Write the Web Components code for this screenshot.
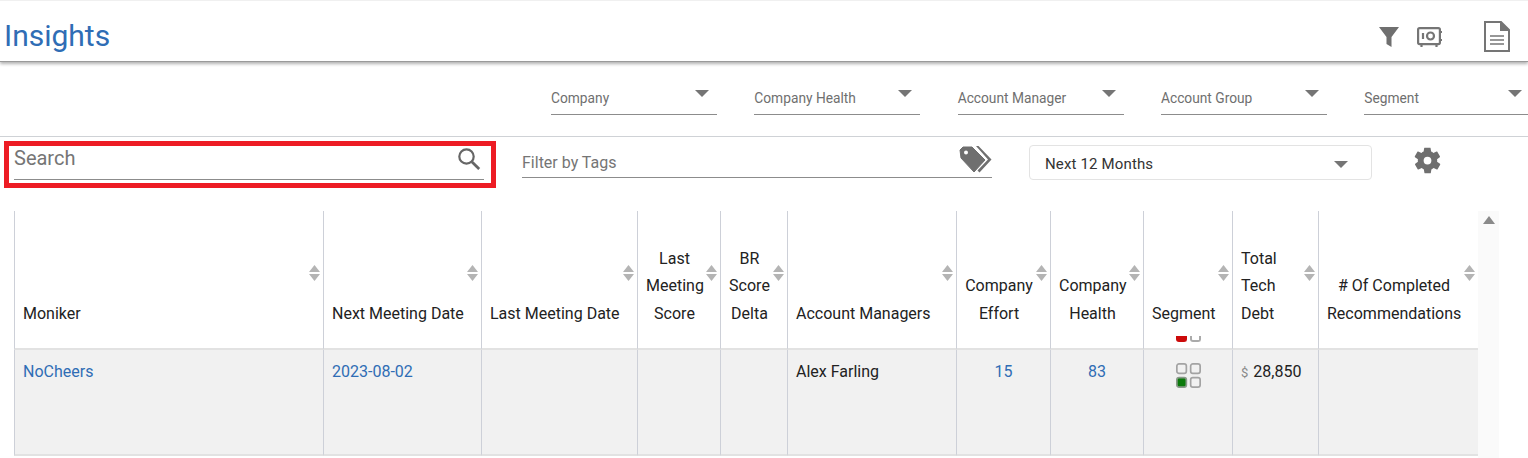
<!DOCTYPE html>
<html>
<head>
<meta charset="utf-8">
<title>Insights</title>
<style>
  html, body { margin: 0; padding: 0; background: #fff; overflow: hidden; }
  body { font-family: Roboto, "Liberation Sans", sans-serif; width: 1528px; height: 458px; }
</style>
</head>
<body>
<insights-page></insights-page>
<script>
const caret = `<svg width="14" height="7" viewBox="0 0 14 7"><path d="M0 0h14L7 7z" fill="#757575"/></svg>`;

class AppHeader extends HTMLElement {
  constructor() {
    super();
    this.attachShadow({ mode: "open" }).innerHTML = `
<style>
  :host { display: flex; align-items: center; height: 62px; box-sizing: border-box; border-top: 1px solid #f0f0f0; border-bottom: 1px solid #9a9a9a; box-shadow: 0 2px 3px rgba(0,0,0,.3); padding-left: 4px; position: relative; }
  h1 { margin: 0; font-size: 30px; font-weight: 400; color: #2f6db5; flex: 1; position: relative; top: 4px; }
  .icons { display: flex; align-items: center; padding-right: 17px; position: relative; top: 5px; }
  svg { display: block; }
</style>
<h1>Insights</h1>
<div class="icons">
  <svg width="20" height="20" viewBox="0 0 20 20" style="margin:2px 18px 0 0"><path d="M0 0h20l-7.500 10v10l-5-3v-7z" fill="#6f6f6f"/></svg>
  <svg width="25" height="21" viewBox="0 0 25 21" fill="none" stroke="#757575" stroke-width="2.200" style="margin:2px 41px 0 0"><rect x="1.100" y="1.100" width="21.800" height="16" rx="1.500"/><circle cx="13.500" cy="9" r="3.500"/><path d="M6 6v6M22.500 5h2.500M22.500 13h2.500M4.500 17v3M19.500 17v3"/></svg>
  <svg width="28" height="31" viewBox="0 0 28 31" fill="none" stroke="#757575" stroke-width="2"><path d="M2 1h16l8 8v21H2z"/><path d="M18 1v8h8" fill="#757575"/><path d="M7 15h14M7 19h14M7 23h14" stroke-width="1.600"/></svg>
</div>`;
  }
}
customElements.define("app-header", AppHeader);

class FilterSelect extends HTMLElement {
  constructor() {
    super();
    this.attachShadow({ mode: "open" }).innerHTML = `
<style>
  :host { display: block; flex: none; width: 166px; height: 31px; box-sizing: border-box; border-bottom: 1px solid #8c8c8c; font-size: 13.750px; color: #6f6f6f; position: relative; }
  .label { position: absolute; left: 0; top: 6px; line-height: 17px; }
  svg { position: absolute; right: 8px; top: 6px; display: block; }
</style>
<span class="label"><slot></slot></span>${caret}`;
  }
}
customElements.define("filter-select", FilterSelect);

class SearchBox extends HTMLElement {
  constructor() {
    super();
    this.attachShadow({ mode: "open" }).innerHTML = `
<style>
  :host { display: block; flex: none; width: 492px; height: 47px; box-sizing: border-box; border: 5px solid #ed1c24; padding: 0 7px 0 5px; }
  .field { display: flex; justify-content: space-between; height: 34px; box-sizing: border-box; border-bottom: 1px solid #8c8c8c; }
  span { font-size: 20px; color: #757575; line-height: 24px; }
  svg { display: block; margin: 1px 3px 0 0; }
</style>
<div class="field"><span>Search</span>
<svg width="24" height="24" viewBox="0 0 24 24" fill="none" stroke="#666" stroke-width="2.200"><circle cx="9.500" cy="9.500" r="7.200"/><path d="M14.800 14.800l7.400 7.200" stroke-width="2.800"/></svg>
</div>`;
  }
}
customElements.define("search-box", SearchBox);

class TagFilter extends HTMLElement {
  constructor() {
    super();
    this.attachShadow({ mode: "open" }).innerHTML = `
<style>
  :host { display: flex; justify-content: space-between; flex: none; width: 470px; height: 33px; box-sizing: border-box; border-bottom: 1px solid #8c8c8c; margin: 4px 0 0 26px; font-size: 16px; color: #757575; }
  span { line-height: 20px; margin-top: 8px; }
  svg { display: block; margin-top: 1px; }
</style>
<span>Filter by Tags</span>
<svg width="33" height="27" viewBox="0 0 33 27"><path d="M1 4 4 1 13 1 26 14 15 26 2 12Z" fill="#6f6f6f" stroke="#6f6f6f" stroke-linejoin="round"/><circle cx="7" cy="6.500" r="2" fill="#fff"/><path d="M17 0h2.500l13 13.500-12 13-2-2 10.500-11z" fill="#6f6f6f"/></svg>`;
  }
}
customElements.define("tag-filter", TagFilter);

class RangeSelect extends HTMLElement {
  constructor() {
    super();
    this.attachShadow({ mode: "open" }).innerHTML = `
<style>
  :host { display: flex; align-items: center; justify-content: space-between; flex: none; width: 343px; height: 35px; box-sizing: border-box; border: 1px solid #e3e3e3; border-radius: 4px; margin: 4px 0 0 37px; padding: 3px 23px 0 15px; font-size: 15px; letter-spacing: .15px; color: #333; }
  svg { display: block; }
</style>
<span><slot></slot></span>${caret}`;
  }
}
customElements.define("range-select", RangeSelect);

class SortHead extends HTMLElement {
  constructor() {
    super();
    this.attachShadow({ mode: "open" }).innerHTML = `
<style>
  :host { display: block; }
  svg { position: absolute; right: 3px; top: 54px; display: block; }
</style>
<slot></slot>
<svg width="11" height="16" viewBox="0 0 11 16" fill="#b4b4b4"><path d="M5.500 0 11 7H0z"/><path d="M0 9h11l-5.500 7z"/></svg>`;
  }
}
customElements.define("sort-head", SortHead);

class SegmentIcon extends HTMLElement {
  constructor() {
    super();
    this.attachShadow({ mode: "open" }).innerHTML = `
<style>
  :host { display: inline-block; width: 25px; height: 25px; vertical-align: top; }
  svg { display: block; }
</style>
<svg width="25" height="25" viewBox="0 0 25 25" fill="none" stroke="#a3a3a3" stroke-width="1.700">
  <rect x=".85" y=".85" width="9.500" height="9.500" rx="2.200"/>
  <rect x="14.650" y=".85" width="9.500" height="9.500" rx="2.200"/>
  <rect x=".85" y="14.650" width="9.500" height="9.500" rx="2.200" fill="#0b7a0b" stroke="#8a9a8a"/>
  <rect x="14.650" y="14.650" width="9.500" height="9.500" rx="2.200"/>
</svg>`;
  }
}
customElements.define("segment-icon", SegmentIcon);

class DataTable extends HTMLElement {
  constructor() {
    super();
    const cols = [
      [310, "Moniker", "l"], [158, "Next Meeting Date", "l"], [156, "Last Meeting Date", "l"],
      [83, "Last<br>Meeting<br>Score", "c"], [67, "BR<br>Score<br>Delta", "c"], [169, "Account Managers", "l"],
      [94, "Company<br>Effort", "c"], [93, "Company<br>Health", "c"], [89, "Segment", "c"],
      [86, "Total<br>Tech<br>Debt", "l"], [159, "# Of Completed<br>Recommendations", "c"]
    ];
    const width = cols.reduce((s, c) => s + c[0], 0);
    this.attachShadow({ mode: "open" }).innerHTML = `
<style>
  :host { display: flex; align-items: flex-start; margin: 24px 0 0 14px; font-size: 16px; line-height: 27.500px; color: #222; }
  table { table-layout: fixed; border-collapse: separate; border-spacing: 0; width: ${width}px; flex: none; }
  th, td { box-sizing: border-box; padding: 0 8px; border-right: 1px solid #cdd0d8; font-weight: 400; position: relative; text-align: left; }
  th:last-child, td:last-child { border-right: 0; }
  th { height: 139px; vertical-align: bottom; padding: 0 17px 20.600px 8px; line-height: 27.500px; border-bottom: 2px solid #e2e2e2; overflow: hidden; background: #fff; }
  th.l { padding-right: 16px; }
  th.c, td.c { text-align: center; }
  td { height: 106px; vertical-align: top; padding-top: 8px; background: #f1f1f1; border-bottom: 2px solid #e2e2e2; }
  td:first-child { border-left: 1px solid #cdd0d8; }
  th:first-child { border-left: 1px solid #cdd0d8; }
  a { color: #2f6db5; text-decoration: none; }
  small { font-size: 13px; color: #888; margin-right: 1px; }
  .peek { position: absolute; left: 32px; bottom: 6px; display: flex; gap: 3px; }
  .peek i { display: block; width: 11px; height: 6px; box-sizing: border-box; border-radius: 0 0 3px 3px; border: 2px solid #aaa; border-top: 0; }
  .peek i.red { background: #cc0a0a; border-color: #cc0a0a; }
  segment-icon { margin-top: 5px; }
  .rail { width: 21px; flex: none; background: #fafafa; height: 247px; position: relative; }
  .rail svg { position: absolute; left: 5px; top: 5px; display: block; }
</style>
<table>
  <colgroup>${cols.map(c => `<col style="width:${c[0]}px">`).join("")}</colgroup>
  <thead><tr>${cols.map(c => `<th class="${c[2]}"><sort-head>${c[1]}</sort-head>${c[1] === "Segment" ? `<div class="peek"><i class="red"></i><i></i></div>` : ""}</th>`).join("")}</tr></thead>
  <tbody><tr>
    <td><a>NoCheers</a></td>
    <td><a>2023-08-02</a></td>
    <td></td><td></td><td></td>
    <td>Alex Farling</td>
    <td class="c"><a>15</a></td>
    <td class="c"><a>83</a></td>
    <td class="c"><segment-icon></segment-icon></td>
    <td><small>$</small> 28,850</td>
    <td></td>
  </tr></tbody>
</table>
<div class="rail"><svg width="12" height="8" viewBox="0 0 12 8"><path d="M6 0 12 8H0z" fill="#8a8a8a"/></svg></div>`;
  }
}
customElements.define("data-table", DataTable);

class InsightsPage extends HTMLElement {
  constructor() {
    super();
    this.attachShadow({ mode: "open" }).innerHTML = `
<style>
  :host { display: block; width: 1528px; height: 458px; overflow: hidden; }
  .filters { display: flex; gap: 37.330px; height: 75px; box-sizing: border-box; border-bottom: 1px solid #cfd2d6; padding: 22px 0 0 551px; width: 1528px; overflow: hidden; }
  .tools { display: flex; align-items: flex-start; padding: 4px 0 0 4px; height: 50px; box-sizing: border-box; }
  .gear { display: block; margin: 4px 0 0 40px; flex: none; }
</style>
<app-header></app-header>
<div class="filters">
  <filter-select>Company</filter-select>
  <filter-select>Company Health</filter-select>
  <filter-select>Account Manager</filter-select>
  <filter-select>Account Group</filter-select>
  <filter-select>Segment</filter-select>
</div>
<div class="tools">
  <search-box></search-box>
  <tag-filter></tag-filter>
  <range-select>Next 12 Months</range-select>
  <svg class="gear" width="31" height="31" viewBox="0 0 24 24"><path fill="#6f6f6f" fill-rule="evenodd" d="M19.400 13c.1-.3.1-.7.1-1s0-.7-.1-1l2.100-1.600c.2-.2.2-.4.100-.6l-2-3.500c-.1-.2-.4-.3-.6-.2l-2.500 1c-.5-.4-1.100-.7-1.700-1l-.4-2.600c0-.3-.2-.4-.5-.4h-4c-.2 0-.4.100-.5.400l-.4 2.600c-.6.300-1.200.6-1.700 1l-2.500-1c-.2-.1-.5 0-.6.200l-2 3.500c-.1.200-.1.400.1.600L4.600 11c-.1.300-.1.700-.1 1s0 .7.1 1l-2.100 1.600c-.2.200-.2.400-.1.600l2 3.500c.1.200.4.300.6.200l2.500-1c.5.400 1.100.7 1.700 1l.4 2.600c.1.300.3.400.5.400h4c.3 0 .5-.1.500-.4l.4-2.600c.6-.3 1.200-.6 1.700-1l2.500 1c.2.100.5 0 .6-.2l2-3.500c.1-.2.100-.4-.1-.6zM12 15a3 3 0 1 1 0-6 3 3 0 0 1 0 6z"/></svg>
</div>
<data-table></data-table>`;
  }
}
customElements.define("insights-page", InsightsPage);
</script>
</body>
</html>
